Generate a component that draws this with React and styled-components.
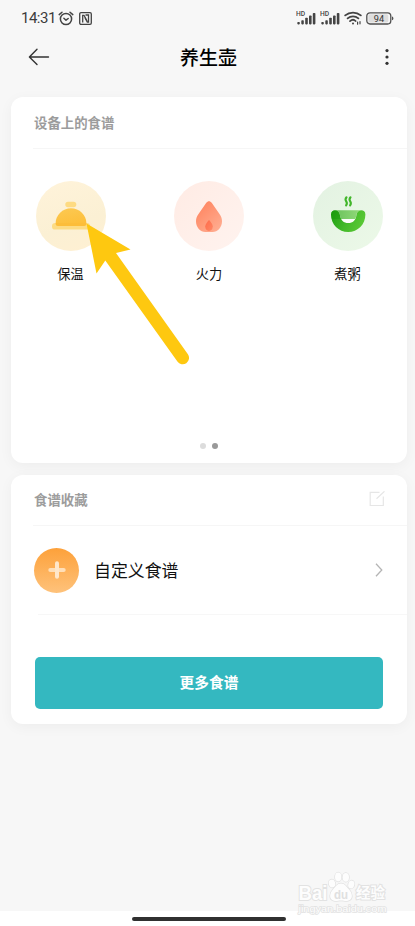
import React from 'react'
import styled, { createGlobalStyle } from "styled-components"

const recipes = [
  { name: '保温', tint: 'linear-gradient(160deg, #fff3da, #fbf0d4 60%, #fff0d2)', icon: 'cloche' },
  { name: '火力', tint: 'linear-gradient(135deg, #ffebe4, #fff3ef)', icon: 'fire' },
  { name: '煮粥', tint: 'linear-gradient(135deg, #e3f2e2, #ecf9e8)', icon: 'bowl' },
];

const SignalIcon = () => (
  <svg width="20" height="14" viewBox="0 0 20 14" fill="#444">
    <text x="0" y="5" fontSize="6.4" fontWeight="500" fontFamily="Roboto, sans-serif" textLength="9.2" lengthAdjust="spacingAndGlyphs">HD</text>
    <rect x="1.3" y="11" width="2.5" height="2.4" rx="0.8" />
    <rect x="5.3" y="9.2" width="2.5" height="4.2" rx="0.8" />
    <rect x="9.2" y="6.8" width="2.6" height="6.6" rx="0.8" />
    <rect x="13" y="4.4" width="2.6" height="9" rx="0.8" />
    <rect x="16.8" y="2" width="2.6" height="11.4" rx="0.8" />
  </svg>
)

const WifiIcon = () => (
  <svg width="18" height="14" viewBox="0 0 18 14" fill="none" stroke="#444" strokeWidth="1.8" strokeLinecap="round">
    <path d="M1.2 4.4C5.6 0.6 12.4 0.6 16.8 4.4" />
    <path d="M3.6 7.4C6.7 4.6 11.3 4.6 14.4 7.4" />
    <path d="M6 10.1C7.8 8.5 10.2 8.5 11.6 10" />
    <circle cx="9" cy="12.4" r="1" fill="#444" stroke="none" />
    <path d="M13.6 11v2.2M16 10.6v2.2" strokeWidth="1.2" />
  </svg>
)

const BatteryIcon = () => (
  <svg width="28" height="13" viewBox="0 0 28 13">
    <rect x="0.8" y="0.8" width="24" height="11.2" rx="3.2" fill="#f7f7f7" stroke="#505050" strokeWidth="1.3" />
    <rect x="2.3" y="2.3" width="20" height="8.2" rx="1.8" fill="#dedede" />
    <path d="M26 4.6q1.4 .3 1.4 1.8t-1.4 1.8z" fill="#505050" />
    <text x="12.9" y="9.7" textAnchor="middle" fontSize="9.2" fontFamily="Roboto, sans-serif" fill="#333">94</text>
  </svg>
)

const AlarmIcon = () => (
  <svg width="16" height="15" viewBox="0 0 16 15" fill="none" stroke="#444" strokeWidth="1.5" strokeLinecap="round" strokeLinejoin="round">
    <circle cx="8" cy="8" r="5.6" />
    <path d="M1.2 3.6L4 1.2M14.8 3.6L12 1.2M5.9 7.2L8 9.2l2.2-1.7" />
  </svg>
)

const NfcIcon = () => (
  <svg width="13" height="13" viewBox="0 0 13 13" fill="none" stroke="#444" strokeWidth="1.3">
    <rect x="0.7" y="0.7" width="11.6" height="11.6" rx="1.3" />
    <path d="M3.7 10.5V3.3h1.3L8 9" />
    <path d="M6.5 3H9.5v7H8.3L5.9 5.5" />
  </svg>
)

const ClocheIcon = () => (
  <svg width="70" height="70" viewBox="0 0 70 70">
    <defs>
      <linearGradient id="dome" x1="0" y1="0" x2="0.3" y2="1">
        <stop offset="0" stopColor="#fcc952" />
        <stop offset="1" stopColor="#fdbf3b" />
      </linearGradient>
    </defs>
    <rect x="29.3" y="20.8" width="11" height="5.4" rx="2.7" fill="#fedb82" />
    <path d="M19.6 45V42.5C19.6 34 26.6 27.3 35 27.3S50.4 34 50.4 42.5V45z" fill="url(#dome)" />
    <rect x="16" y="42" width="38" height="6.6" rx="3.2" fill="#fddb83" />
    <path d="M19.6 42h30.8c.2 1.8-.6 3-2.4 3H22c-1.8 0-2.5-1.2-2.4-3z" fill="#fcbd3a" />
  </svg>
)

const FireIcon = () => (
  <svg width="70" height="70" viewBox="0 0 70 70">
    <defs>
      <linearGradient id="flame" x1="0.1" y1="0.1" x2="0.8" y2="1">
        <stop offset="0" stopColor="#ff8560" />
        <stop offset="1" stopColor="#ffac90" />
      </linearGradient>
      <linearGradient id="core" x1="0" y1="0" x2="1" y2="1">
        <stop offset="0" stopColor="#ff6b48" />
        <stop offset="1" stopColor="#ff8867" />
      </linearGradient>
    </defs>
    <path d="M32.3 21.7C33.7 19.6 36.3 19.6 37.7 21.7L45.5 33C47.2 35.5 48 37.7 48 40.2C48 46.2 43.7 51 38.5 51H31.5C26.3 51 22 46.2 22 40.2C22 37.7 22.8 35.5 24.5 33z" fill="url(#flame)" />
    <path d="M35 39c1.3 1.3 3.8 4.3 3.8 6.6 0 2.6-1.7 4.3-3.8 4.3s-3.8-1.7-3.8-4.3c0-2.3 2.5-5.3 3.8-6.6z" fill="url(#core)" />
  </svg>
)

const BowlIcon = () => (
  <svg width="70" height="70" viewBox="0 0 70 70">
    <defs>
      <linearGradient id="bowl" x1="0" y1="0.2" x2="1" y2="0.5">
        <stop offset="0" stopColor="#20a012" />
        <stop offset="0.5" stopColor="#42b929" />
        <stop offset="1" stopColor="#5bc936" />
      </linearGradient>
      <linearGradient id="soup" x1="0" y1="0" x2="1" y2="0">
        <stop offset="0" stopColor="#6bc25c" />
        <stop offset="1" stopColor="#93da7b" />
      </linearGradient>
    </defs>
    <path d="M27.5 36H43V40C40 44 31 44 28 40z" fill="#fbfdfa" />
    <path d="M18 33.5C18 30.7 20 29.3 22 29.3C24.8 29.3 26.3 31 26.8 33.5C27.5 39.5 30.8 42 35.2 42C39.8 42 43 39.5 43.5 33.5C44 31 45.6 29.3 48.3 29.3C50.5 29.3 52.4 30.7 52.4 33.5C52.4 43.5 44.8 51 35.2 51S18 43.5 18 33.5z" fill="url(#bowl)" />
    <path d="M22 29.3H48.3C45.6 29.3 44 31 43.5 33.5Q43.2 36 42.2 38H28.2Q27.2 36 26.8 33.5C26.3 31 24.8 29.3 22 29.3z" fill="url(#soup)" />
    <path d="M18.3 36C17.4 32.5 18.8 29.3 22 29.3C24.8 29.3 26.3 31 26.8 33.5Q27.2 36 28.2 38H18.9z" fill="#169807" opacity="0.4" />
    <path d="M33.5 16.3c-1.3 1.5-1.3 2.7-.3 4.1 1 1.4 .9 2.6-.1 4M37.5 16.3c-1.3 1.5-1.3 2.7-.3 4.1 1 1.4 .9 2.6-.1 4" fill="none" stroke="#42b62b" strokeWidth="2.1" strokeLinecap="round" />
  </svg>
)

const icons = { cloche: ClocheIcon, fire: FireIcon, bowl: BowlIcon };

const App = () => {
  return (
    <Screen>
      <GlobalStyle />

      <StatusBar>
        <Clock>14:31</Clock>
        <AlarmIcon />
        <NfcIcon />
        <StatusRight>
          <SignalIcon />
          <SignalIcon />
          <WifiIcon />
          <BatteryIcon />
        </StatusRight>
      </StatusBar>

      <Header>
        <IconButton aria-label="返回">
          <svg width="22" height="18" viewBox="0 0 22 18" fill="none" stroke="#333" strokeWidth="1.4" strokeLinecap="round" strokeLinejoin="round">
            <path d="M20.5 9H1.5M9 1.3L1.4 9L9 16.5" />
          </svg>
        </IconButton>
        <Title>养生壶</Title>
        <IconButton aria-label="更多">
          <svg width="4" height="18" viewBox="0 0 4 18" fill="#333">
            <circle cx="2" cy="2.6" r="1.6" />
            <circle cx="2" cy="9" r="1.6" />
            <circle cx="2" cy="15.3" r="1.6" />
          </svg>
        </IconButton>
      </Header>

      <Card $height={366}>
        <CardHead $height={52}>设备上的食谱</CardHead>
        <RecipeList>
          {recipes.map((item) => {
            const Icon = icons[item.icon];
            return (
              <Recipe key={item.name}>
                <RecipeIcon $tint={item.tint}><Icon /></RecipeIcon>
                <span>{item.name}</span>
              </Recipe>
            )
          })}
        </RecipeList>
        <Dots>
          <Dot />
          <Dot $active />
        </Dots>
      </Card>

      <Card $height={249}>
        <CardHead $height={51}>
          <span>食谱收藏</span>
          <svg width="16" height="16" viewBox="0 0 16 16" fill="none" stroke="#e6e6e6" strokeWidth="1.2">
            <path d="M10.5 1.3H1.2V14.5H14.3V5.5M7.5 7.7L15.5 0.3" />
          </svg>
        </CardHead>
        <CustomRow>
          <AddIcon>
            <svg width="18" height="18" viewBox="0 0 18 18" strokeWidth="4" strokeLinecap="round">
              <path d="M2.3 9H15.7" stroke="#ffdfb8" />
              <path d="M9 2.3V15.7" stroke="#ffe7ca" />
            </svg>
          </AddIcon>
          <RowName>自定义食谱</RowName>
          <svg width="8" height="14" viewBox="0 0 8 14" fill="none" stroke="#b5b5b5" strokeWidth="1.3">
            <path d="M1 0.8L6.8 7L1 13.2" />
          </svg>
        </CustomRow>
        <MoreButton>更多食谱</MoreButton>
      </Card>

      <NavBar>
        <HomeBar />
      </NavBar>

      {/* arrow pointing at the first recipe */}
      <Pointer width="108" height="148" viewBox="0 0 108 148" fill="#fec810">
        <path d="M1.5 3.5L45.5 29.5L31 33L102.9 134.3A6.2 6.2 0 0 1 92.4 141.6L20.3 40.5L11.5 53.5z" />
      </Pointer>

      <Watermark width="96" height="46" viewBox="0 0 96 46" fill="#fdfdfd" stroke="#e2e2e2" strokeWidth="1.5" paintOrder="stroke">
        <text x="3.5" y="29.5" fontSize="20" fontWeight="700" textLength="29" lengthAdjust="spacingAndGlyphs" strokeWidth="2">Bai</text>
        <ellipse cx="37" cy="13.5" rx="3.2" ry="4" transform="rotate(-15 37 13.5)" />
        <ellipse cx="43.2" cy="7" rx="3.2" ry="4.4" />
        <ellipse cx="50.8" cy="7.3" rx="3.2" ry="4.4" />
        <ellipse cx="56.3" cy="14.5" rx="3" ry="4" transform="rotate(15 56.3 14.5)" />
        <path d="M46 13.5c4 0 5.5 3.5 8 6 3.5 3.5 4.5 10-1 11.3-2.5.6-4.5-.4-7-.4s-4.5 1-7 .4c-5.5-1.3-4.5-7.8-1-11.3 2.5-2.5 4-6 8-6z" />
        <text x="39" y="29" fontSize="13" fontWeight="700" textLength="14" lengthAdjust="spacingAndGlyphs" fill="#e0e0e0" stroke="none">du</text>
        <text x="61" y="28" fontSize="14.5" fontWeight="700" textLength="29" lengthAdjust="spacingAndGlyphs" strokeWidth="2">经验</text>
        <text x="3.5" y="41.5" fontSize="9.5" textLength="88" lengthAdjust="spacingAndGlyphs" strokeWidth="1.4">jingyan.baidu.com</text>
      </Watermark>
    </Screen>
  )
}

const GlobalStyle = createGlobalStyle`
  * {
    box-sizing: border-box;
  }

  body {
    margin: 0;
    background: #f7f7f7;
    font-family: "Noto Sans CJK SC", sans-serif;
  }

  svg {
    display: block;
    flex-shrink: 0;
  }
`;

const Screen = styled.div`
  position: relative;
  display: flex;
  flex-direction: column;
  width: 415px;
  height: 926px;
  overflow: hidden;
  background: #f7f7f7;
`;

const StatusBar = styled.div`
  display: flex;
  align-items: center;
  height: 36px;
  padding: 0 21px;

  svg + svg {
    margin-left: 5px;
  }
`;

const Clock = styled.span`
  width: 37px;
  font-family: Roboto, sans-serif;
  font-size: 15px;
  line-height: 20px;
  letter-spacing: -0.5px;
  color: #3c3c3c;
`;

const StatusRight = styled.div`
  display: flex;
  align-items: center;
  margin-left: auto;

  svg + svg {
    margin-left: 4px;
  }
`;

const Header = styled.header`
  display: flex;
  align-items: center;
  justify-content: space-between;
  height: 42px;
  margin-bottom: 19px;
  padding: 0 26px 0 28px;
`;

const IconButton = styled.button`
  display: flex;
  padding: 0;
  border: none;
  background: none;
`;

const Title = styled.h1`
  flex: 1;
  margin: 0;
  padding-left: 130px;
  font-size: 19px;
  font-weight: 500;
  line-height: 28px;
  color: #000;
`;

const Card = styled.section`
  display: flex;
  flex-direction: column;
  flex-shrink: 0;
  height: ${({ $height }) => $height}px;
  margin: 0 8px 12px 11px;
  border-radius: 12px;
  background: #fff;
  box-shadow: 0 3px 14px rgba(0, 0, 0, 0.045);
`;

const CardHead = styled.div`
  display: flex;
  align-items: center;
  justify-content: space-between;
  height: ${({ $height }) => $height}px;
  margin-left: 22px;
  padding: 0 22px 2px 1px;
  border-bottom: 1px solid #f6f6f6;
  font-size: 13.4px;
  font-weight: 700;
  color: #9c9c9c;
`;

const RecipeList = styled.div`
  display: flex;
  justify-content: space-between;
  padding: 32px 24.5px 0;
`;

const Recipe = styled.div`
  display: flex;
  flex-direction: column;
  align-items: center;
  gap: 13px;
  width: 70px;
  font-size: 13.2px;
  line-height: 20px;
  color: #111;
`;

const RecipeIcon = styled.div`
  width: 70px;
  height: 70px;
  border-radius: 50%;
  background: ${({ $tint }) => $tint};
`;

const Dots = styled.div`
  display: flex;
  justify-content: center;
  gap: 6px;
  margin-top: auto;
  padding-bottom: 14px;
`;

const Dot = styled.span`
  width: 6px;
  height: 6px;
  border-radius: 50%;
  background: ${({ $active }) => $active ? "#999" : "#dcdcdc"};
`;

const CustomRow = styled.div`
  display: flex;
  align-items: center;
  height: 89px;
  margin-left: 23px;
  padding: 0 24px 1px 0;
  background: linear-gradient(#f7f7f7, #f7f7f7) 4px 100% / 100% 1px no-repeat;
`;

const AddIcon = styled.div`
  display: flex;
  align-items: center;
  justify-content: center;
  width: 45px;
  height: 45px;
  border-radius: 50%;
  background: linear-gradient(#fda13a, #fec27b);
`;

const RowName = styled.span`
  flex: 1;
  margin-left: 15px;
  padding-bottom: 2px;
  font-size: 16.9px;
  color: #111;
`;

const MoreButton = styled.button`
  height: 52px;
  margin: 42px 24px 0;
  padding: 0 0 3px;
  border: none;
  border-radius: 5px;
  background: #34b8c0;
  font-family: inherit;
  font-size: 14.7px;
  font-weight: 700;
  color: #fff;
`;

const NavBar = styled.footer`
  display: flex;
  justify-content: center;
  height: 15px;
  margin-top: auto;
  padding: 6px 0 0 3px;
  background: #fff;
`;

const HomeBar = styled.div`
  width: 154px;
  height: 4px;
  border-radius: 2px;
  background: #303030;
`;

const Pointer = styled.svg`
  position: absolute;
  left: 85px;
  top: 220px;
`;

const Watermark = styled.svg`
  position: absolute;
  left: 295px;
  top: 870px;
  font-family: "Liberation Sans", "Noto Sans CJK SC", sans-serif;
`;

export default App;
